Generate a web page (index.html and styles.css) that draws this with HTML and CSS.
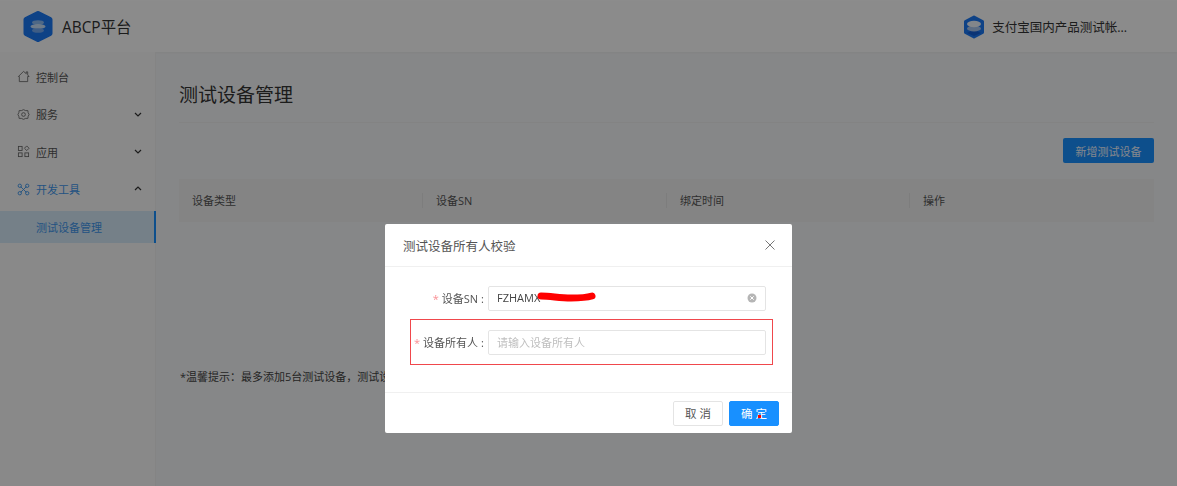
FILE: index.html
```html
<!DOCTYPE html>
<html lang="zh">
<head>
<meta charset="utf-8">
<title>测试设备管理</title>
<link rel="stylesheet" href="styles.css">
</head>
<body>
<div class="page">
  <header class="topbar">
    <div class="brand">
      <svg class="logo" viewBox="0 0 30 31"><path d="M15 2.500 27 8.500V22.500L15 28.500 3 22.500V8.500z" fill="#1b78f5" stroke="#1b78f5" stroke-width="5" stroke-linejoin="round"/><ellipse cx="15" cy="11.500" rx="6" ry="2.300" fill="#8fbdf5"/><ellipse cx="15" cy="15.500" rx="7.500" ry="2.600" fill="#c9e0fa"/><ellipse cx="15" cy="19.500" rx="6" ry="2.300" fill="#73a9f2"/></svg>
      <span class="brand-name">ABCP平台</span>
    </div>
    <div class="account">
      <svg class="logo-small" viewBox="0 0 22 24"><path d="M11 2 19.500 6.500V17.500L11 22 2.500 17.500V6.500z" fill="#1b78f5" stroke="#1b78f5" stroke-width="3" stroke-linejoin="round"/><path d="M11 14.500 18 18 11 21 4 18z" fill="#155fd6"/><ellipse cx="11" cy="13.500" rx="7" ry="3" fill="#a9c6ee"/><ellipse cx="11" cy="9" rx="7" ry="3.200" fill="#eef4fc"/></svg>
      <span class="account-name">支付宝国内产品测试帐...</span>
    </div>
  </header>
  <div class="main">
    <nav class="sidebar">
      <div class="menu-item">
        <svg class="menu-icon" viewBox="0 0 14 14"><path d="M1.500 7 7 1.500l3 2.500V2h1.500v3.300L13 7h-1.500v5.500h-9V7z" fill="none" stroke="#666" stroke-width=".9"/></svg>
        <span>控制台</span>
      </div>
      <div class="menu-item">
        <svg class="menu-icon" viewBox="0 0 14 14"><path d="M7 1.800 9.300 2.800 11.700 2.800 12 5 13 7 12 9 11.700 11.200 9.300 11.200 7 12.200 4.700 11.200 2.300 11.200 2 9 1 7 2 5 2.300 2.800 4.700 2.800z" fill="none" stroke="#666" stroke-width=".9" stroke-linejoin="round"/><circle cx="7" cy="7" r="2" fill="none" stroke="#666" stroke-width=".9"/></svg>
        <span>服务</span>
        <svg class="chevron" viewBox="0 0 8 5"><path d="M1 1 4 4 7 1" fill="none" stroke="#333" stroke-width="1.200"/></svg>
      </div>
      <div class="menu-item">
        <svg class="menu-icon" viewBox="0 0 14 14"><g fill="none" stroke="#666" stroke-width=".9"><rect x="1.500" y="1.500" width="4" height="4.500"/><rect x="1.500" y="8.500" width="4" height="4"/><rect x="8.500" y="8.500" width="4" height="4"/><path d="M10.500 1 13 3.500 10.500 6 8 3.500z"/></g></svg>
        <span>应用</span>
        <svg class="chevron" viewBox="0 0 8 5"><path d="M1 1 4 4 7 1" fill="none" stroke="#333" stroke-width="1.200"/></svg>
      </div>
      <div class="menu-item is-open">
        <svg class="menu-icon" viewBox="0 0 14 14"><g fill="none" stroke="#3f97ec" stroke-width="1"><path d="M4 4 10 10M10 4 4 10"/><circle cx="3" cy="3" r="1.800"/><circle cx="11" cy="3" r="1.800"/><circle cx="3" cy="11" r="1.800"/><circle cx="11" cy="11" r="1.800"/></g></svg>
        <span>开发工具</span>
        <svg class="chevron" viewBox="0 0 8 5"><path d="M1 4 4 1 7 4" fill="none" stroke="#333" stroke-width="1.200"/></svg>
      </div>
      <div class="menu-sub">测试设备管理</div>
    </nav>
    <main class="content">
      <h1 class="title">测试设备管理</h1>
      <div class="toolbar"><button class="btn-primary-add">新增测试设备</button></div>
      <div class="table-head">
        <div class="cell cell-type">设备类型</div>
        <div class="cell cell-sn">设备SN</div>
        <div class="cell cell-time">绑定时间</div>
        <div class="cell cell-op">操作</div>
      </div>
      <p class="tip">*温馨提示：最多添加5台测试设备，测试设备绑定后，30天内不可解绑</p>
    </main>
  </div>
</div>
<div class="mask"></div>
<section class="modal">
  <div class="modal-head">
    <span>测试设备所有人校验</span>
    <svg class="close" viewBox="0 0 10 10"><path d="M0.500 0.500 9.500 9.500M9.500 0.500 0.500 9.500" stroke="#777" stroke-width="1" fill="none"/></svg>
  </div>
  <div class="modal-body">
    <div class="field">
      <label class="field-label"><i>*</i>设备SN<b>:</b></label>
      <div class="input">
        <span class="value">FZHAMX</span>
        <svg class="scribble" viewBox="0 0 60 12"><path d="M4 5C14 5 22 7 34 7 44 7 50 6.500 55 5" fill="none" stroke="#f00" stroke-width="7" stroke-linecap="round"/></svg>
        <svg class="clear" viewBox="0 0 10 10"><circle cx="5" cy="5" r="4.500" fill="#b5b5b5"/><path d="M3.300 3.300 6.700 6.700M6.700 3.300 3.300 6.700" stroke="#fff" stroke-width="1"/></svg>
      </div>
    </div>
    <div class="field field-marked">
      <label class="field-label"><i>*</i>设备所有人<b>:</b></label>
      <div class="input"><span class="placeholder">请输入设备所有人</span></div>
    </div>
  </div>
  <div class="modal-foot">
    <button class="btn">取 消</button>
    <button class="btn btn-primary">确 定<span class="dot"></span></button>
  </div>
</section>
</body>
</html>
```
FILE: styles.css
```css
* { box-sizing: border-box; }
html, body { margin: 0; height: 100%; overflow: hidden; }
body {
  font-family: "Open Sans", "Noto Sans CJK SC", sans-serif;
  font-size: 12px;
  color: #595959;
  background: #f5f6f7;
}
.page { height: 486px; display: flex; flex-direction: column; }
.topbar {
  height: 52px;
  background: #fdfdfd;
  display: flex;
  align-items: center;
  justify-content: space-between;
  padding: 0 50px 0 23px;
  border-top: 1px solid #fff;
  box-shadow: 0 1px 2px rgba(0,0,0,.04);
}
.brand { display: flex; align-items: center; gap: 9px; }
.logo { width: 30px; height: 31px; display: block; }
.brand-name { font-size: 15.400px; color: #333; }
.account { display: flex; align-items: center; gap: 7px; }
.logo-small { width: 22px; height: 24px; display: block; }
.account-name { font-size: 12.500px; color: #333; }
.main { flex: 1; display: flex; }
.sidebar {
  width: 156px;
  padding-top: 6px;
  background: #f9f9f9;
  border-right: 1px solid #f0f0f0;
}
.menu-item {
  height: 37.500px;
  display: flex;
  align-items: center;
  padding: 0 13px 0 17px;
  gap: 6px;
  font-size: 11px;
  color: #555;
}
.menu-item .chevron { margin-left: auto; }
.menu-icon { width: 13px; height: 13px; display: block; }
.chevron { width: 8px; height: 5px; display: block; }
.is-open { color: #3f97ec; }
.is-open .chevron { margin-bottom: 2px; }
.menu-sub {
  height: 32px;
  margin-top: 3px;
  padding-left: 36px;
  line-height: 33px;
  font-size: 11px;
  color: #3f97ec;
  background: #d5e9f8;
  border-right: 2px solid #1890ff;
  margin-right: -1px;
}
.content { flex: 1; padding: 0 23px; min-width: 0; }
.title {
  margin: 0;
  height: 71px;
  padding-top: 27px;
  font-size: 19px;
  line-height: 32px;
  font-weight: 400;
  color: #333;
  border-bottom: 1px solid #eee;
}
.toolbar { display: flex; justify-content: flex-end; padding-top: 15px; height: 56px; }
.btn-primary-add {
  width: 91px;
  height: 25px;
  border: 0;
  border-radius: 2px;
  background: #1890ff;
  color: #f0f6ff;
  font: inherit;
  font-size: 11px;
  padding: 0;
}
.table-head {
  height: 43px;
  display: grid;
  grid-template-columns: 243px 244px 243px 1fr;
  align-items: center;
  background: #f1f1f1;
  color: #555;
  font-size: 11px;
}
.cell { padding-left: 13px; height: 15px; line-height: 15px; border-left: 1px solid #e4e4e4; }
.cell-type { border-left: 0; }
.tip { margin: 145px 0 0 1px; font-size: 11px; line-height: 20px; color: #444; white-space: nowrap; }
.mask { position: fixed; inset: 0; background: rgba(0,0,0,.45); }
.modal {
  position: fixed;
  left: 385px;
  top: 224px;
  width: 407px;
  height: 209px;
  background: #fff;
  border-radius: 2px;
  display: flex;
  flex-direction: column;
}
.modal-head {
  height: 43px;
  display: flex;
  align-items: center;
  justify-content: space-between;
  padding: 0 17px 0 18px;
  border-bottom: 1px solid #f0f0f0;
  font-size: 12.500px;
  color: #555;
}
.close { width: 10px; height: 10px; display: block; }
.modal-body { flex: 1; padding: 19px 26px 0; display: flex; flex-direction: column; gap: 19px; }
.field { display: flex; align-items: center; height: 25px; }
.field-label {
  width: 77px;
  padding: 0 4px 2px 0;
  text-align: right;
  font-size: 11px;
  color: #555;
  white-space: nowrap;
}
.field-label i { color: #f98f93; font-style: normal; margin-right: 3px; }
.field-label b { font-weight: 400; margin-left: 3px; }
.input {
  flex: 1;
  height: 25px;
  border: 1px solid #e4e4e4;
  border-radius: 2px;
  display: flex;
  align-items: center;
  padding: 0 8px 2px;
  position: relative;
}
.value { font-size: 11px; color: #444; }
.scribble { position: absolute; left: 48px; top: 4px; width: 60px; height: 12px; }
.clear { position: absolute; right: 8px; top: 6px; width: 10px; height: 10px; }
.placeholder { font-size: 11px; color: #bfbfbf; }
.field-marked { position: relative; }
.field-marked::after {
  content: "";
  position: absolute;
  left: -1px;
  right: -7px;
  top: -11px;
  bottom: -10px;
  border: 1.500px solid #f0474c;
  pointer-events: none;
}
.modal-foot {
  height: 41px;
  border-top: 1px solid #f0f0f0;
  display: flex;
  justify-content: flex-end;
  align-items: center;
  gap: 6px;
  padding: 0 13px 0 0;
}
.btn {
  width: 50px;
  height: 25px;
  padding: 0;
  background: #fff;
  border: 1px solid #e4e4e4;
  border-radius: 2px;
  font: inherit;
  font-size: 11.500px;
  color: #555;
  position: relative;
}
.btn-primary { background: #1890ff; border-color: #1890ff; color: #fff; }
.dot { position: absolute; left: 28px; top: 13px; width: 3px; height: 3px; background: #f00; }
```
